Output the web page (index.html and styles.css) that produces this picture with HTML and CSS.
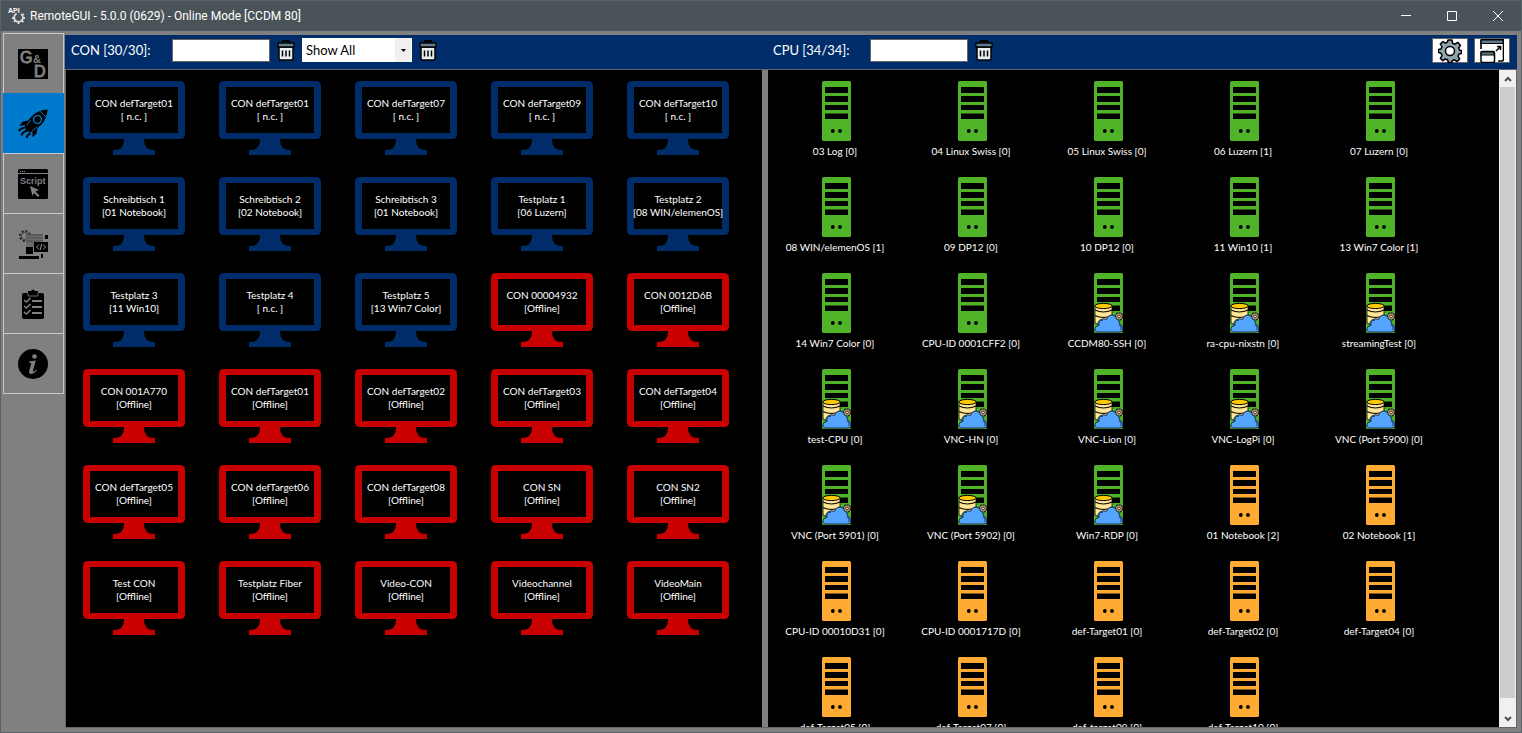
FILE: index.html
```html
<!DOCTYPE html>
<html lang="en">
<head>
<meta charset="utf-8">
<title>RemoteGUI</title>
<link rel="stylesheet" href="styles.css">
</head>
<body>
<svg class="defs" aria-hidden="true">
<symbol id="monitor" viewBox="0 0 102 74"><path fill="currentColor" fill-rule="evenodd" d="M5 0H97Q102 0 102 5V53Q102 58 97 58H61V59Q61 69 71 69H72V74H30V69H31Q41 69 41 59V58H5Q0 58 0 53V5Q0 0 5 0ZM7 6V52H95V6Z"/></symbol>
<symbol id="server" viewBox="0 0 29 60"><rect width="29" height="60" rx="1.5" fill="currentColor"/><path d="M3 6h23v6H3zM3 15h23v6H3zM3 24h23v5H3zM3 32.500h23v5.500H3z" fill="#000"/><circle cx="10.800" cy="50" r="1.900"/><circle cx="18" cy="50" r="1.900"/></symbol>
<symbol id="vm" viewBox="0 0 29 60"><rect width="29" height="60" rx="1.500" fill="currentColor"/><path d="M3 6h23v6H3zM3 15h23v6H3zM3 24h23v5H3zM3 32.500h23v5.500H3z" fill="#000"/><path d="M1 33v17l4 2 13-5V33z" fill="#ffe696" stroke="#000" stroke-width=".8"/><ellipse cx="9.500" cy="33" rx="8.700" ry="2.600" fill="#ffc800" stroke="#000"/><path d="M1 37q8.500 4 17 0M1 42.500q8.500 4 17 0" fill="none" stroke="#000" stroke-width="1.100"/><circle cx="25" cy="43.500" r="3.600" fill="#b9a67b" stroke="#222" stroke-width="1.500" stroke-dasharray="2 .7"/><circle cx="25" cy="43.500" r="1.400" fill="#ffe680" stroke="#222" stroke-width=".8"/><path d="M3 59Q0 58 1 55Q2 53 4 53Q3 48 7 46.500Q10 45 12.500 46.500Q14 42 18 42Q22 42 22.500 46Q26 47 25.500 51Q29 52 29 56Q29 59 26 59Z" fill="#55a5ff" stroke="#102039" stroke-width=".9"/><path d="M5 53q-1-5 4-6M25 52q3 1 2 5" fill="none" stroke="#071c3b" stroke-width=".8"/></symbol>
<symbol id="trash" viewBox="0 0 18 21"><path d="M5.500 3V1.800Q5.500.8 6.500.8H11.500Q12.500.8 12.500 1.800V3" fill="none" stroke="#000" stroke-width="1.700"/><path d="M2 7h14v11.500q0 1.500-1.500 1.500h-11Q2 20 2 18.500z" fill="#e9eff1" stroke="#000" stroke-width="1.500"/><rect x=".8" y="3" width="16.400" height="4" rx="1.500" fill="#607d8b" stroke="#000" stroke-width="1.500"/><path d="M5.500 10.500v6M9 10.500v6M12.500 10.500v6" stroke="#000" stroke-width="1.500"/></symbol>
</svg>
<div class="window">
<header class="titlebar">
<svg class="app-icon" viewBox="0 0 18 18"><text x="0" y="6" class="api">API</text><circle cx="10.500" cy="10.500" r="4.300" fill="none" stroke="#ddd" stroke-width="1.700" stroke-dasharray="22 5" transform="rotate(-55 10.500 10.500)"/><path d="M16 7l-1.500 1M17 11h-2M15.500 15l-1.500-1.300M10.500 17v-2M6 15l1.200-1.300M4 11h2" stroke="#ddd" stroke-width="1.800"/></svg>
<h1>RemoteGUI - 5.0.0 (0629) - Online Mode [CCDM 80]</h1>
<button class="win-btn" aria-label="Minimize"><svg viewBox="0 0 12 12"><path d="M1 5.500h10"/></svg></button>
<button class="win-btn" aria-label="Maximize"><svg viewBox="0 0 12 12"><path d="M1.500 1.500h9v9h-9z"/></svg></button>
<button class="win-btn" aria-label="Close"><svg viewBox="0 0 12 12"><path d="M1 1l10 10M11 1L1 11"/></svg></button>
</header>
<div class="body">
<nav class="sidebar">
<button aria-label="G&amp;D"><svg viewBox="0 0 30 30"><path d="M0 0h30v30H0z"/><g fill="#808080"><text x="2" y="14" class="gd">G</text><text x="15" y="14" class="gd-amp">&amp;</text><text x="16" y="28" class="gd">D</text></g></svg></button>
<button class="active" aria-label="Connections"><svg viewBox="0 0 30 30"><path d="M29.500.5Q20 1 14 7L10 11.500 5 12.500 1 17 7 16 6.500 19 11.500 23.500 14.500 22.500 14.500 28.500 18.500 24.500 19.500 19 23 16Q29 10 29.500.5Z"/><circle cx="19.500" cy="10.500" r="3.900" fill="none" stroke="#007acc" stroke-width="1.400"/><path d="M22.500 2.500l5.500 5.500M12.500 11l-4 5.500M14 22l5-4" fill="none" stroke="#007acc"/><path d="M.5 22q2.500-3 6-3.500M3.500 26.500q1-4 6.500-5M8.500 29q.5-3 4-4.500" fill="none" stroke="#000" stroke-width="2"/></svg></button>
<button aria-label="Script"><svg viewBox="0 0 30 30"><rect width="30" height="30" rx="1.500"/><path d="M0 4.500h30" stroke="#808080"/><path d="M2 2.500h1M4 2.500h1M6 2.500h1" stroke="#999"/><text x="2" y="15" class="script-text">Script</text><path d="M12 17l9 4-3.500 1.500 4 4-1.500 1.500-4-4-1.500 3z" fill="#808080"/></svg></button>
<button aria-label="Programming"><svg viewBox="0 0 30 30"><circle cx="7" cy="7" r="5" fill="none" stroke="#222" stroke-width="2" stroke-dasharray="2 1.900"/><circle cx="7" cy="7" r="3.700" fill="none" stroke="#333" stroke-width=".7"/><path d="M8 5h17v13H8z" fill="#6b6b6b"/><path d="M8 6h17M8 9h17M8 12h17" stroke="#444" stroke-width=".8"/><path d="M27 6h3v4h-3zM8 18h7v7H8zM16 13h14v10H16zM1 27h20v3H1zM23 25h2v4h-2z"/><path d="M21 15.500L18.500 18l2.500 2.500M25 15.500l2.500 2.500-2.500 2.500M23.700 15l-1.500 6" fill="none" stroke="#999"/></svg></button>
<button aria-label="Checklist"><svg viewBox="0 0 30 30"><path d="M6 4h4V2h3q2-3 4 0h3v2h4q2 0 2 2v22q0 2-2 2H6q-2 0-2-2V6q0-2 2-2z"/><path d="M10 4v3h10V4" fill="none" stroke="#808080" stroke-width=".8"/><path d="M14 12h10M14 18h10M14 24h10" stroke="#808080" stroke-width="1.800"/><path d="M6 11l2.500 2 4-4M6 17l2.500 2 4-4M6 23l2.500 2 4-4" fill="none" stroke="#808080" stroke-width="1.600"/></svg></button>
<button aria-label="Information"><svg viewBox="0 0 30 30"><circle cx="15" cy="15" r="15"/><circle cx="16.500" cy="7.500" r="2.300" fill="#808080"/><path d="M11 12.500L17.800 11.500 15 21.500Q14.700 23 16 22.500L18.300 20.800 18.800 21.500Q15.500 25.500 12.500 25Q10.500 24.500 11.300 21.500L13.200 15Q13.600 13.500 11 13.500Z" fill="#808080"/></svg></button>
</nav>
<main>
<div class="toolbar">
<div class="tools">
<label for="con">CON [30/30]:</label><input id="con" type="text">
<button class="clear" aria-label="Clear CON filter"><svg><use href="#trash"/></svg></button>
<span class="select-box"><select aria-label="CON status"><option>Show All</option></select><svg viewBox="0 0 5 3"><path d="M0 0h5L2.500 3z"/></svg></span>
<button class="clear" aria-label="Clear status"><svg><use href="#trash"/></svg></button>
</div>
<div class="tools">
<label for="cpu">CPU [34/34]:</label><input id="cpu" type="text">
<button class="clear" aria-label="Clear CPU filter"><svg><use href="#trash"/></svg></button>
<div class="actions">
<button aria-label="Settings"><svg viewBox="0 0 24 24"><path d="M10 1h4l.6 3.200 2.400 1 2.700-1.800 2.800 2.800L20.700 9l1 2.200 1.800.3v3l-2.500.6-1 2.200 1.700 2.700-2.500 2.500-2.700-1.700-2.300 1L13.700 23.500h-3.400L9.700 21l-2.400-1-2.600 1.700-2.400-2.400 1.700-2.700-1-2.400L.5 13.500v-3L3 9.900l1-2.300-1.700-2.500 2.700-2.600 2.400 1.700 2-1z" fill="#90a4ae" stroke="#000" stroke-width="1.500" stroke-linejoin="round"/><circle cx="12" cy="12" r="4.500" fill="#fff" stroke="#000" stroke-width="1.500"/></svg></button>
<button aria-label="Restore window layout"><svg viewBox="0 0 24 24"><path d="M1 10V2q0-1.500 1.500-1.500h20Q23.500.5 23.500 2v18.500q0 1.500-1.500 1.500h-4" fill="none" stroke="#000" stroke-width="1.600"/><path d="M1 1h22v3.500H1z" fill="#607d8b" stroke="#000" stroke-width="1.200"/><rect x="1" y="12.500" width="13.500" height="11" rx="1.500" fill="#fff" stroke="#000" stroke-width="1.500"/><path d="M1 13h13v3H1z" fill="#607d8b" stroke="#000" stroke-width="1.100"/><path d="M16 12l4-4M17 7.500H20.500V11" fill="none" stroke="#000" stroke-width="1.500"/></svg></button>
</div>
</div>
</div>
<div class="panels">
<section class="tiles" aria-label="CON">
<button class="con"><svg><use href="#monitor"/></svg><span>CON defTarget01<br>[ n.c. ]</span></button>
<button class="con"><svg><use href="#monitor"/></svg><span>CON defTarget01<br>[ n.c. ]</span></button>
<button class="con"><svg><use href="#monitor"/></svg><span>CON defTarget07<br>[ n.c. ]</span></button>
<button class="con"><svg><use href="#monitor"/></svg><span>CON defTarget09<br>[ n.c. ]</span></button>
<button class="con"><svg><use href="#monitor"/></svg><span>CON defTarget10<br>[ n.c. ]</span></button>
<button class="con"><svg><use href="#monitor"/></svg><span>Schreibtisch 1<br>[01 Notebook]</span></button>
<button class="con"><svg><use href="#monitor"/></svg><span>Schreibtisch 2<br>[02 Notebook]</span></button>
<button class="con"><svg><use href="#monitor"/></svg><span>Schreibtisch 3<br>[01 Notebook]</span></button>
<button class="con"><svg><use href="#monitor"/></svg><span>Testplatz 1<br>[06 Luzern]</span></button>
<button class="con"><svg><use href="#monitor"/></svg><span>Testplatz 2<br>[08 WIN/elemenOS]</span></button>
<button class="con"><svg><use href="#monitor"/></svg><span>Testplatz 3<br>[11 Win10]</span></button>
<button class="con"><svg><use href="#monitor"/></svg><span>Testplatz 4<br>[ n.c. ]</span></button>
<button class="con"><svg><use href="#monitor"/></svg><span>Testplatz 5<br>[13 Win7 Color]</span></button>
<button class="con offline"><svg><use href="#monitor"/></svg><span>CON 00004932<br>[Offline]</span></button>
<button class="con offline"><svg><use href="#monitor"/></svg><span>CON 0012D6B<br>[Offline]</span></button>
<button class="con offline"><svg><use href="#monitor"/></svg><span>CON 001A770<br>[Offline]</span></button>
<button class="con offline"><svg><use href="#monitor"/></svg><span>CON defTarget01<br>[Offline]</span></button>
<button class="con offline"><svg><use href="#monitor"/></svg><span>CON defTarget02<br>[Offline]</span></button>
<button class="con offline"><svg><use href="#monitor"/></svg><span>CON defTarget03<br>[Offline]</span></button>
<button class="con offline"><svg><use href="#monitor"/></svg><span>CON defTarget04<br>[Offline]</span></button>
<button class="con offline"><svg><use href="#monitor"/></svg><span>CON defTarget05<br>[Offline]</span></button>
<button class="con offline"><svg><use href="#monitor"/></svg><span>CON defTarget06<br>[Offline]</span></button>
<button class="con offline"><svg><use href="#monitor"/></svg><span>CON defTarget08<br>[Offline]</span></button>
<button class="con offline"><svg><use href="#monitor"/></svg><span>CON SN<br>[Offline]</span></button>
<button class="con offline"><svg><use href="#monitor"/></svg><span>CON SN2<br>[Offline]</span></button>
<button class="con offline"><svg><use href="#monitor"/></svg><span>Test CON<br>[Offline]</span></button>
<button class="con offline"><svg><use href="#monitor"/></svg><span>Testplatz Fiber<br>[Offline]</span></button>
<button class="con offline"><svg><use href="#monitor"/></svg><span>Video-CON<br>[Offline]</span></button>
<button class="con offline"><svg><use href="#monitor"/></svg><span>Videochannel<br>[Offline]</span></button>
<button class="con offline"><svg><use href="#monitor"/></svg><span>VideoMain<br>[Offline]</span></button>
</section>
<div class="cpu-panel">
<section class="tiles" aria-label="CPU">
<button class="cpu"><svg><use href="#server"/></svg><span>03 Log [0]</span></button>
<button class="cpu"><svg><use href="#server"/></svg><span>04 Linux Swiss [0]</span></button>
<button class="cpu"><svg><use href="#server"/></svg><span>05 Linux Swiss [0]</span></button>
<button class="cpu"><svg><use href="#server"/></svg><span>06 Luzern [1]</span></button>
<button class="cpu"><svg><use href="#server"/></svg><span>07 Luzern [0]</span></button>
<button class="cpu"><svg><use href="#server"/></svg><span>08 WIN/elemenOS [1]</span></button>
<button class="cpu"><svg><use href="#server"/></svg><span>09 DP12 [0]</span></button>
<button class="cpu"><svg><use href="#server"/></svg><span>10 DP12 [0]</span></button>
<button class="cpu"><svg><use href="#server"/></svg><span>11 Win10 [1]</span></button>
<button class="cpu"><svg><use href="#server"/></svg><span>13 Win7 Color [1]</span></button>
<button class="cpu"><svg><use href="#server"/></svg><span>14 Win7 Color [0]</span></button>
<button class="cpu"><svg><use href="#server"/></svg><span>CPU-ID 0001CFF2 [0]</span></button>
<button class="cpu"><svg><use href="#vm"/></svg><span>CCDM80-SSH [0]</span></button>
<button class="cpu"><svg><use href="#vm"/></svg><span>ra-cpu-nixstn [0]</span></button>
<button class="cpu"><svg><use href="#vm"/></svg><span>streamingTest [0]</span></button>
<button class="cpu"><svg><use href="#vm"/></svg><span>test-CPU [0]</span></button>
<button class="cpu"><svg><use href="#vm"/></svg><span>VNC-HN [0]</span></button>
<button class="cpu"><svg><use href="#vm"/></svg><span>VNC-Lion [0]</span></button>
<button class="cpu"><svg><use href="#vm"/></svg><span>VNC-LogPi [0]</span></button>
<button class="cpu"><svg><use href="#vm"/></svg><span>VNC (Port 5900) [0]</span></button>
<button class="cpu"><svg><use href="#vm"/></svg><span>VNC (Port 5901) [0]</span></button>
<button class="cpu"><svg><use href="#vm"/></svg><span>VNC (Port 5902) [0]</span></button>
<button class="cpu"><svg><use href="#vm"/></svg><span>Win7-RDP [0]</span></button>
<button class="cpu busy"><svg><use href="#server"/></svg><span>01 Notebook [2]</span></button>
<button class="cpu busy"><svg><use href="#server"/></svg><span>02 Notebook [1]</span></button>
<button class="cpu busy"><svg><use href="#server"/></svg><span>CPU-ID 00010D31 [0]</span></button>
<button class="cpu busy"><svg><use href="#server"/></svg><span>CPU-ID 0001717D [0]</span></button>
<button class="cpu busy"><svg><use href="#server"/></svg><span>def-Target01 [0]</span></button>
<button class="cpu busy"><svg><use href="#server"/></svg><span>def-Target02 [0]</span></button>
<button class="cpu busy"><svg><use href="#server"/></svg><span>def-Target04 [0]</span></button>
<button class="cpu busy"><svg><use href="#server"/></svg><span>def-Target05 [0]</span></button>
<button class="cpu busy"><svg><use href="#server"/></svg><span>def-Target07 [0]</span></button>
<button class="cpu busy"><svg><use href="#server"/></svg><span>def-target09 [0]</span></button>
<button class="cpu busy"><svg><use href="#server"/></svg><span>def-Target10 [0]</span></button>
</section>
<div class="scrollbar">
<button aria-label="Scroll up"><svg viewBox="0 0 8 6"><path d="M1 5l3-3 3 3"/></svg></button>
<div class="track"><div class="thumb"></div></div>
<button aria-label="Scroll down"><svg viewBox="0 0 8 6"><path d="M1 1l3 3 3-3"/></svg></button>
</div>
</div>
</div>
</main>
</div>
</div>
</body>
</html>
```
FILE: styles.css
```css
* { box-sizing: border-box; }
body { margin: 0; font-family: Lato, sans-serif; color: #fff; }
button, input, select { font: inherit; color: inherit; margin: 0; padding: 0; border: 0; background: none; border-radius: 0; }
svg { display: block; }
.defs { position: absolute; width: 0; height: 0; }
.window { height: 100vh; display: flex; flex-direction: column; border: 1px solid #59646a; background: #808080; }
.titlebar { display: flex; align-items: center; height: 30px; padding-left: 7px; background: #4a5357; flex: none; }
.app-icon { width: 18px; height: 18px; margin-right: 4px; }
.api { font: bold 7px "Liberation Sans", sans-serif; fill: #fff; }
.titlebar h1 { flex: 1; margin: 0; font: 12px Roboto, sans-serif; }
.win-btn { width: 46px; height: 30px; display: grid; place-items: center; }
.win-btn svg { width: 12px; height: 12px; fill: none; stroke: #fff; }
.body { flex: 1; min-height: 0; display: flex; padding: 2px 4px 4px 2px; }
.sidebar { width: 62px; flex: none; display: flex; flex-direction: column; }
.sidebar button { width: 61px; height: 60px; display: grid; place-items: center; padding-right: 1px; border: 1px solid #c8c8c8; border-bottom: 0; }
.sidebar button:last-child { height: 61px; border-bottom: 1px solid #c8c8c8; }
.sidebar .active { background: #007acc; border-color: #007acc; }
.sidebar svg { width: 30px; height: 30px; }
.gd { font: 16px "Liberation Sans", sans-serif; stroke: #808080; }
.gd-amp { font: bold 11px "Liberation Sans", sans-serif; }
.script-text { font: bold 9px "Liberation Sans", sans-serif; fill: #808080; }
main { flex: 1; min-width: 0; display: flex; flex-direction: column; margin-top: 2px; }
.toolbar, .panels { display: grid; grid-template-columns: minmax(0, 12fr) minmax(0, 13fr); }
.toolbar { height: 34px; background: #002d6a; flex: none; }
.tools { display: flex; align-items: center; padding: 0 7px 4px 6px; }
.tools label { width: 101px; font-size: 13px; }
.tools input { width: 98px; height: 23px; padding: 0 4px; border: 1px solid #666; background: #fff; color: #000; font-size: 13px; }
.tools + .tools { padding-left: 11px; }
.tools + .tools label { width: 97px; }
.clear { margin: 0 7px; }
.clear svg { width: 18px; height: 21px; }
.select-box { position: relative; }
.select-box select { display: block; appearance: none; width: 110px; height: 24px; padding: 0 4px; color: #000; font-size: 13px; background: linear-gradient(to left, #fff 1px, #f0f0f0 1px, #f0f0f0 17px, #fff 17px); }
.select-box svg { position: absolute; right: 6px; top: 11px; width: 5px; height: 3px; pointer-events: none; }
.actions { display: flex; gap: 6px; margin-left: auto; }
.actions button { width: 36px; height: 25px; display: grid; place-items: center; background: #fff; border: 1px solid #666; }
.actions svg { width: 24px; height: 24px; }
.panels { flex: 1; min-height: 0; border: 1px solid #646464; }
.tiles { flex: 1; min-width: 0; overflow: hidden; background: #000; display: grid; grid-template-columns: repeat(auto-fill, 136px); grid-auto-rows: 96px; }
.cpu-panel { min-height: 0; display: flex; border-left: 6px solid #808080; }
.tiles button { display: grid; justify-items: center; align-content: start; padding-top: 11px; font-size: 10px; line-height: 13px; white-space: nowrap; }
.con svg { grid-area: 1 / 1; width: 102px; height: 74px; color: #002d6a; }
.con span { grid-area: 1 / 1; padding-top: 16px; }
.offline svg { color: #c80000; }
.cpu svg { width: 29px; height: 60px; color: #50b428; }
.cpu span { padding: 4px 2px 0 0; }
.busy svg { color: #ffaa32; }
.scrollbar { width: 17px; flex: none; display: flex; flex-direction: column; background: #f0f0f0; }
.scrollbar button { height: 17px; display: grid; place-items: center; }
.scrollbar svg { width: 8px; height: 6px; fill: none; stroke: #505050; stroke-width: 2; }
.track { flex: 1; padding: 0 1px; }
.thumb { height: 98%; background: #cdcdcd; }
```
